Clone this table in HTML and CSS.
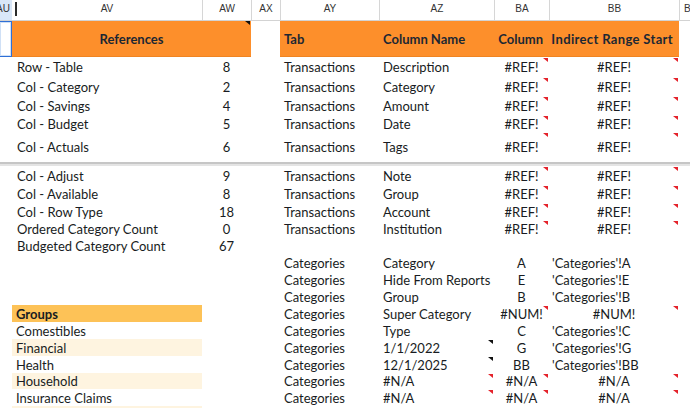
FILE: index.html
```html
<!DOCTYPE html>
<html>
<head>
<meta charset="utf-8">
<link rel="stylesheet" href="styles.css">
</head>
<body>
<div class="sheet">
  <div class="colhead">
    <div class="ch selhead"><span>AU</span></div>
    <div class="ch first">AV<span class="cursor"></span></div>
    <div class="ch">AW</div>
    <div class="ch">AX</div>
    <div class="ch">AY</div>
    <div class="ch">AZ</div>
    <div class="ch">BA</div>
    <div class="ch">BB</div>
    <div class="ch edge">BC</div>
  </div>

  <div class="row h36">
    <div class="c selcell"></div>
    <div class="c orange span2 center bold">References<i class="tri dark"></i></div>
    <div class="c"></div>
    <div class="c orange pl bold">Tab</div>
    <div class="c orange pl bold">Column Name</div>
    <div class="c orange pr right bold">Column</div>
    <div class="c orange pr right bold wide">Indirect Range Start</div>
    <div class="c"></div>
  </div>

  <div class="row h20">
    <div class="c"></div><div class="c pl">Row - Table</div><div class="c center">8</div><div class="c"></div>
    <div class="c pl">Transactions</div><div class="c pl">Description</div>
    <div class="c center err">#REF!</div><div class="c center err">#REF!</div><div class="c"></div>
  </div>
  <div class="row h19">
    <div class="c"></div><div class="c pl">Col - Category</div><div class="c center">2</div><div class="c"></div>
    <div class="c pl">Transactions</div><div class="c pl">Category</div>
    <div class="c center err">#REF!</div><div class="c center err">#REF!</div><div class="c"></div>
  </div>
  <div class="row h19">
    <div class="c"></div><div class="c pl">Col - Savings</div><div class="c center">4</div><div class="c"></div>
    <div class="c pl">Transactions</div><div class="c pl">Amount</div>
    <div class="c center err">#REF!</div><div class="c center err">#REF!</div><div class="c"></div>
  </div>
  <div class="row h17">
    <div class="c"></div><div class="c pl">Col - Budget</div><div class="c center">5</div><div class="c"></div>
    <div class="c pl">Transactions</div><div class="c pl">Date</div>
    <div class="c center err">#REF!</div><div class="c center err">#REF!</div><div class="c"></div>
  </div>
  <div class="row h30">
    <div class="c"></div><div class="c pl">Col - Actuals</div><div class="c center">6</div><div class="c"></div>
    <div class="c pl">Transactions</div><div class="c pl">Tags</div>
    <div class="c center err">#REF!</div><div class="c center err">#REF!</div><div class="c"></div>
  </div>

  <div class="freeze"></div>

  <div class="row h19">
    <div class="c"></div><div class="c pl">Col - Adjust</div><div class="c center">9</div><div class="c"></div>
    <div class="c pl">Transactions</div><div class="c pl">Note</div>
    <div class="c center err">#REF!</div><div class="c center err">#REF!</div><div class="c"></div>
  </div>
  <div class="row h18">
    <div class="c"></div><div class="c pl">Col - Available</div><div class="c center">8</div><div class="c"></div>
    <div class="c pl">Transactions</div><div class="c pl">Group</div>
    <div class="c center err">#REF!</div><div class="c center err">#REF!</div><div class="c"></div>
  </div>
  <div class="row h17">
    <div class="c"></div><div class="c pl">Col - Row Type</div><div class="c center">18</div><div class="c"></div>
    <div class="c pl">Transactions</div><div class="c pl">Account</div>
    <div class="c center err">#REF!</div><div class="c center err">#REF!</div><div class="c"></div>
  </div>
  <div class="row h17">
    <div class="c"></div><div class="c pl">Ordered Category Count</div><div class="c center">0</div><div class="c"></div>
    <div class="c pl">Transactions</div><div class="c pl">Institution</div>
    <div class="c center err">#REF!</div><div class="c center err">#REF!</div><div class="c"></div>
  </div>
  <div class="row h17">
    <div class="c"></div><div class="c pl">Budgeted Category Count</div><div class="c center">67</div><div class="c"></div>
    <div class="c"></div><div class="c"></div><div class="c"></div><div class="c"></div><div class="c"></div>
  </div>

  <div class="row h17">
    <div class="c"></div><div class="c"></div><div class="c"></div><div class="c"></div>
    <div class="c pl">Categories</div><div class="c pl">Category</div>
    <div class="c center">A</div><div class="c pls">'Categories'!A</div><div class="c"></div>
  </div>
  <div class="row h17">
    <div class="c"></div><div class="c"></div><div class="c"></div><div class="c"></div>
    <div class="c pl">Categories</div><div class="c pl">Hide From Reports</div>
    <div class="c center">E</div><div class="c pls">'Categories'!E</div><div class="c"></div>
  </div>
  <div class="row h17">
    <div class="c"></div><div class="c"></div><div class="c"></div><div class="c"></div>
    <div class="c pl">Categories</div><div class="c pl">Group</div>
    <div class="c center">B</div><div class="c pls">'Categories'!B</div><div class="c"></div>
  </div>
  <div class="row h17">
    <div class="c"></div><div class="c plg groups bold">Groups</div><div class="c"></div><div class="c"></div>
    <div class="c pl">Categories</div><div class="c pl">Super Category</div>
    <div class="c center err">#NUM!</div><div class="c center err">#NUM!</div><div class="c"></div>
  </div>
  <div class="row h17">
    <div class="c"></div><div class="c plg">Comestibles</div><div class="c"></div><div class="c"></div>
    <div class="c pl">Categories</div><div class="c pl">Type</div>
    <div class="c center">C</div><div class="c pls">'Categories'!C</div><div class="c"></div>
  </div>
  <div class="row h17">
    <div class="c"></div><div class="c plg cream">Financial</div><div class="c"></div><div class="c"></div>
    <div class="c pl">Categories</div><div class="c pl note">1/1/2022</div>
    <div class="c center">G</div><div class="c pls">'Categories'!G</div><div class="c"></div>
  </div>
  <div class="row h17">
    <div class="c"></div><div class="c plg">Health</div><div class="c"></div><div class="c"></div>
    <div class="c pl">Categories</div><div class="c pl note">12/1/2025</div>
    <div class="c center">BB</div><div class="c pls">'Categories'!BB</div><div class="c"></div>
  </div>
  <div class="row h16">
    <div class="c"></div><div class="c plg cream">Household</div><div class="c"></div><div class="c"></div>
    <div class="c pl">Categories</div><div class="c pl err">#N/A</div>
    <div class="c center err">#N/A</div><div class="c center err">#N/A</div><div class="c"></div>
  </div>
  <div class="row h17">
    <div class="c"></div><div class="c plg">Insurance Claims</div><div class="c"></div><div class="c"></div>
    <div class="c pl">Categories</div><div class="c pl err">#N/A</div>
    <div class="c center err">#N/A</div><div class="c center err">#N/A</div><div class="c"></div>
  </div>
  <div class="row h17">
    <div class="c"></div><div class="c plg cream"></div><div class="c"></div><div class="c"></div>
    <div class="c"></div><div class="c"></div><div class="c"></div><div class="c"></div><div class="c"></div>
  </div>
</div>
</body>
</html>
```

FILE: styles.css
```css
* { box-sizing: border-box; margin: 0; padding: 0; }
html, body { width: 690px; height: 408px; overflow: hidden; background: #fff; }
body { font-family: Lato, "Open Sans", sans-serif; font-size: 13px; color: #181c22; }

.sheet { width: 690px; }

.colhead, .row {
  display: grid;
  grid-template-columns: 12px 190px 49px 29px 99px 115px 55px 130px 11px;
}

.colhead {
  height: 21px;
  border-bottom: 1px solid #d3d3d3;
  font-family: "Liberation Sans", Arial, sans-serif;
  font-size: 10px;
  color: #333;
}
.ch {
  display: flex;
  align-items: center;
  justify-content: center;
  padding-bottom: 3px;
  border-left: 1px solid #d6d6d6;
  position: relative;
  overflow: hidden;
  white-space: nowrap;
}
.ch.first { border-left: none; }
.ch.edge { justify-content: flex-start; padding-left: 4px; }
.selhead { background: #d9e7f8; border-left: none; justify-content: flex-end; }
.selhead span { margin-right: 2px; }
.cursor {
  position: absolute;
  left: 3px;
  top: 2px;
  width: 2px;
  height: 14px;
  background: #2b2b2b;
}

.h36 { height: 36px; }
.h30 { height: 30px; }
.h20 { height: 20px; }
.h19 { height: 19px; }
.h18 { height: 18px; }
.h17 { height: 17px; }
.h16 { height: 16px; }

.c {
  display: flex;
  align-items: center;
  position: relative;
  white-space: nowrap;
  min-width: 0;
}
.pl { padding-left: 4px; }
.row .c:nth-child(2).pl { padding-left: 5px; }
.pls { padding-left: 3px; }
.plg { padding-left: 4px; }
.pr { padding-right: 6px; }
.center { justify-content: center; }
.right { justify-content: flex-end; }
.bold { font-weight: 700; }
.wide { letter-spacing: 0.35px; }

.orange {
  background: #fd8f2b;
  color: #1c2733;
  border-bottom: 1px solid #ef8422;
}
.span2 { grid-column: span 2; }

.selcell {
  border: 1px solid #2f6fd6;
  border-left: none;
  box-shadow: inset 0 0 0 1px #cfe0f6;
}

.groups { background: #fdc257; }
.cream { background: #fef4e0; }

.tri {
  position: absolute;
  top: 0;
  right: 1px;
  border-top: 4px solid #111;
  border-left: 5px solid transparent;
}
.err::after, .note::after {
  content: "";
  position: absolute;
  top: 1px;
  right: 1px;
  border-top: 4px solid #e4222b;
  border-left: 5px solid transparent;
}
.note::after { border-top-color: #111; }

.freeze {
  height: 4px;
  background: #e4e4e4;
  border-top: 2px solid #c6c6c6;
}
```
